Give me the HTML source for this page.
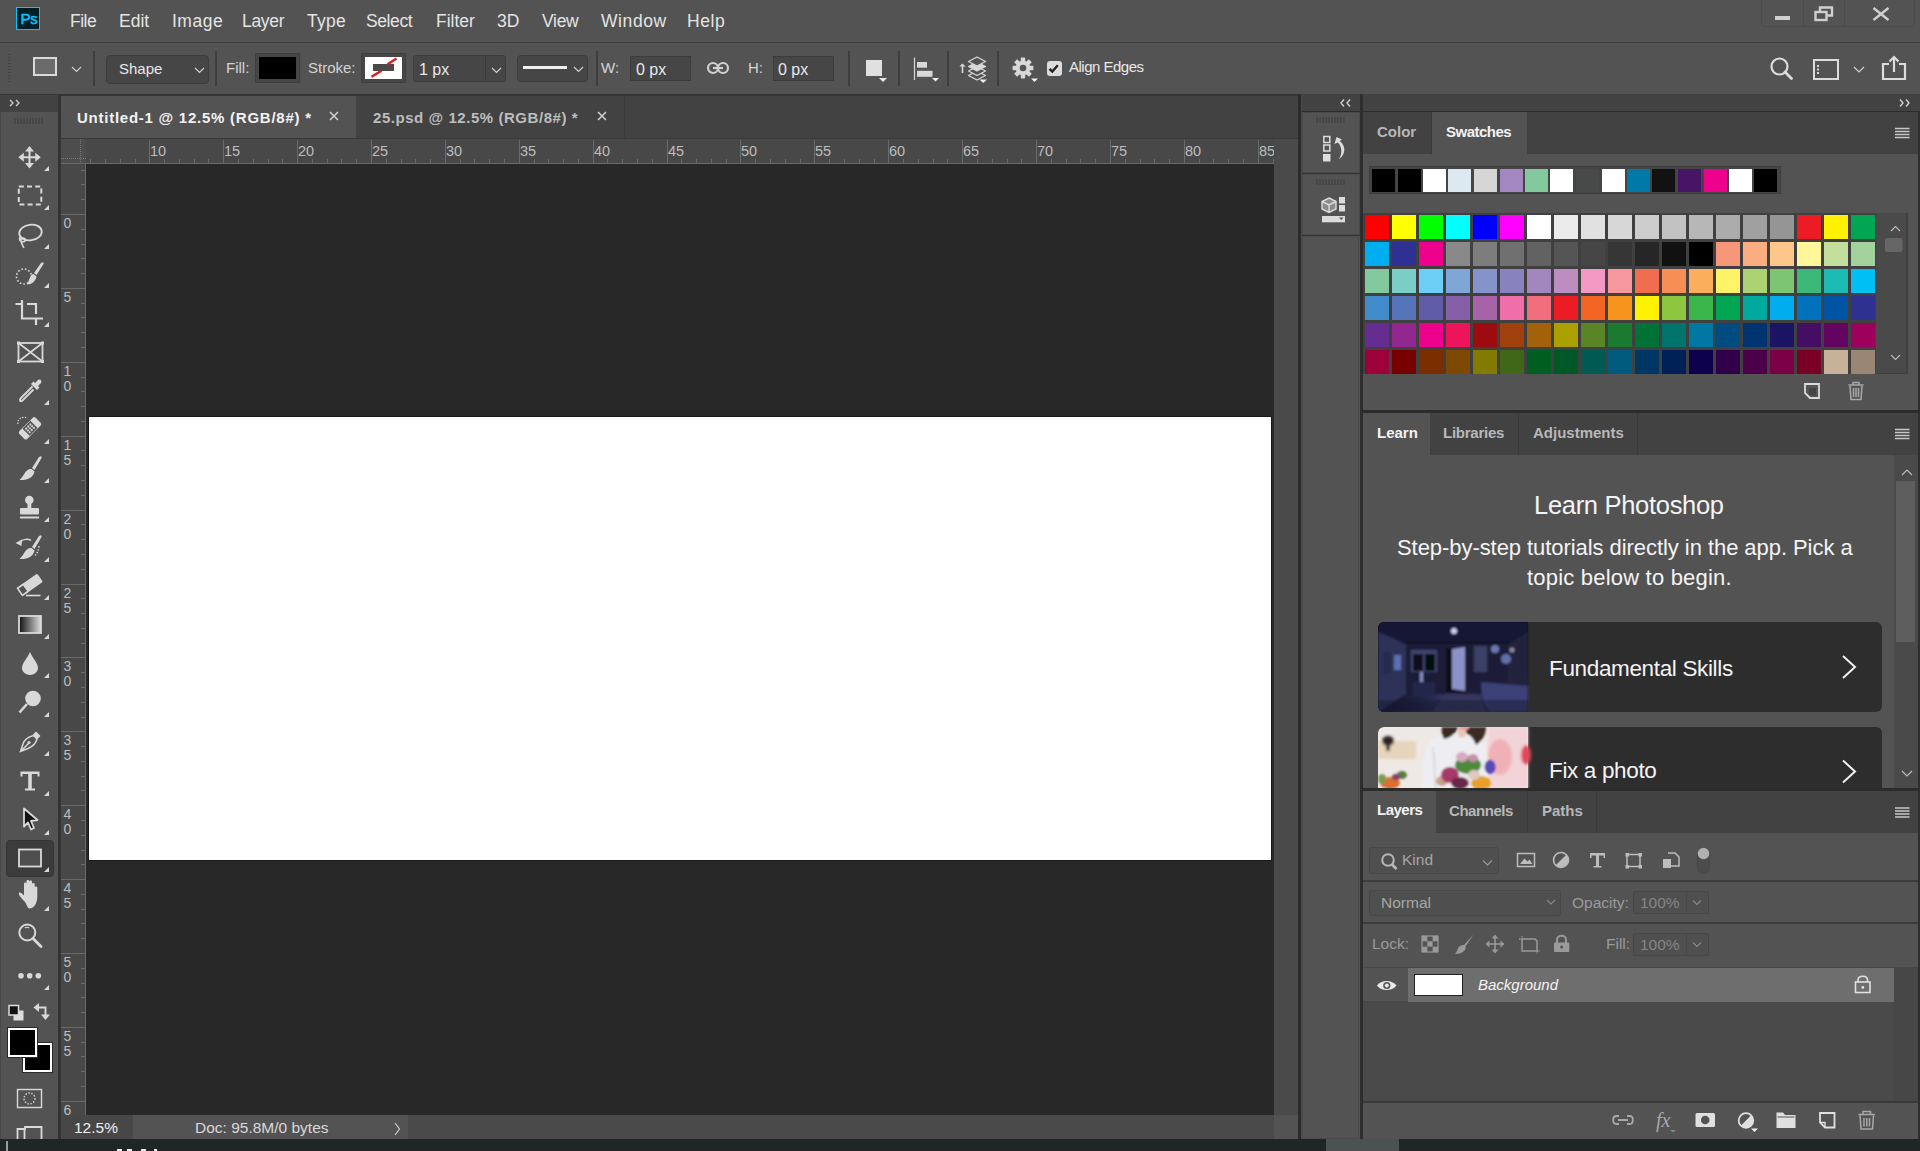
<!DOCTYPE html>
<html><head><meta charset="utf-8">
<style>
*{margin:0;padding:0;box-sizing:border-box}
html,body{width:1920px;height:1151px;overflow:hidden;background:#535353;font-family:"Liberation Sans",sans-serif;color:#e8e8e8}
.a{position:absolute}
.mi{position:absolute;top:10px;font-size:17.5px;color:#e4e4e4;white-space:nowrap;line-height:22px}
.sep{position:absolute;top:51px;width:2px;height:35px;background:#3e3e3e}
.lbl{position:absolute;font-size:15px;color:#d4d4d4;white-space:nowrap;line-height:18px}
.tabt{position:absolute;font-size:15px;font-weight:bold;white-space:nowrap;line-height:18px}
svg{position:absolute;overflow:visible}
.lt{position:absolute;color:#f4f4f4;white-space:nowrap;line-height:1.15}
.rn{position:absolute;font-size:14.5px;color:#bdbdbd;line-height:16px}
.rv{position:absolute;font-size:14px;color:#bdbdbd;line-height:14.5px;text-align:center;width:9px}
</style></head><body>
<!-- MENU BAR -->
<div class="a" style="left:0;top:0;width:1920px;height:42px;background:#535353"></div>
<div class="a" style="left:16px;top:7px;width:24px;height:23px;background:#001e26;border:1.6px solid #00c8ff"></div>
<div class="a" style="left:20.5px;top:8.5px;font-size:15px;color:#00c8ff;line-height:20px;-webkit-text-stroke:0.5px #00c8ff;letter-spacing:-0.3px">Ps</div>
<div class="mi" style="left:70px;letter-spacing:-0.5px">File</div>
<div class="mi" style="left:119px">Edit</div>
<div class="mi" style="left:172px;letter-spacing:0.5px">Image</div>
<div class="mi" style="left:242px;letter-spacing:-0.3px">Layer</div>
<div class="mi" style="left:307px;letter-spacing:0.3px">Type</div>
<div class="mi" style="left:366px;letter-spacing:-0.4px">Select</div>
<div class="mi" style="left:436px">Filter</div>
<div class="mi" style="left:497px">3D</div>
<div class="mi" style="left:542px;letter-spacing:-0.3px">View</div>
<div class="mi" style="left:601px;letter-spacing:0.6px">Window</div>
<div class="mi" style="left:687px;letter-spacing:0.6px">Help</div>

<!-- OPTIONS BAR -->
<div class="a" style="left:0;top:42px;width:1920px;height:1px;background:#3f3f3f"></div>
<div class="a" style="left:0;top:94px;width:1920px;height:2px;background:#363636"></div>


<!-- options content -->
<div class="a" style="left:8px;top:54px;width:3px;height:29px;background:repeating-linear-gradient(#464646 0 1.5px,transparent 1.5px 3px)"></div>
<div class="a" style="left:33px;top:57px;width:24px;height:19px;border:2px solid #d9d9d9;background:#6b6b6b"></div>
<svg style="left:71px;top:66px" width="11" height="7"><path d="M1 1 L5.5 5.5 L10 1" stroke="#cfcfcf" stroke-width="1.2" fill="none"/></svg>
<div class="sep" style="left:93px"></div>
<div class="a" style="left:106px;top:55px;width:103px;height:29px;background:#464646;border:1px solid #3c3c3c;border-radius:4px"></div>
<div class="lbl" style="left:119px;top:60px;color:#e8e8e8;font-size:15px">Shape</div>
<svg style="left:194px;top:67px" width="11" height="7"><path d="M1 1 L5.5 5.5 L10 1" stroke="#cfcfcf" stroke-width="1.2" fill="none"/></svg>
<div class="sep" style="left:215px"></div>
<div class="lbl" style="left:226px;top:59px">Fill:</div>
<div class="a" style="left:255px;top:53px;width:45px;height:30px;background:#464646;border:1px solid #3e3e3e"></div>
<div class="a" style="left:259px;top:57px;width:37px;height:22px;background:#000"></div>
<div class="lbl" style="left:308px;top:59px">Stroke:</div>
<div class="a" style="left:361px;top:53px;width:45px;height:30px;background:#464646;border:1px solid #3e3e3e"></div>
<div class="a" style="left:365px;top:57px;width:37px;height:22px;background:#fff"></div>
<div class="a" style="left:373px;top:64px;width:21px;height:7px;background:#4a4a4a"></div>
<svg style="left:365px;top:57px" width="37" height="22"><path d="M6.5 19.8 L16.5 13.8 M22.5 7.2 L31.5 1.5" stroke="#e01a1a" stroke-width="2.4"/></svg>
<div class="a" style="left:413px;top:55px;width:93px;height:27px;background:#464646;border:1px solid #3c3c3c;border-radius:3px"></div>
<div class="a" style="left:485px;top:56px;width:1px;height:25px;background:#3a3a3a"></div>
<div class="lbl" style="left:419px;top:60.5px;color:#e8e8e8;font-size:16px">1 px</div>
<svg style="left:491px;top:67px" width="11" height="7"><path d="M1 1 L5.5 5.5 L10 1" stroke="#cfcfcf" stroke-width="1.2" fill="none"/></svg>
<div class="a" style="left:517px;top:55px;width:71px;height:27px;background:#464646;border:1px solid #3c3c3c;border-radius:4px"></div>
<div class="a" style="left:523px;top:66px;width:44px;height:3px;background:#f0f0f0"></div>
<svg style="left:573px;top:66px" width="11" height="7"><path d="M1 1 L5.5 5.5 L10 1" stroke="#cfcfcf" stroke-width="1.2" fill="none"/></svg>
<div class="sep" style="left:596px"></div>
<div class="lbl" style="left:601px;top:59px">W:</div>
<div class="a" style="left:630px;top:56px;width:61px;height:25px;background:#464646;border:1px solid #3c3c3c"></div>
<div class="lbl" style="left:636px;top:60.5px;color:#e8e8e8;font-size:16px">0 px</div>
<svg style="left:707px;top:61px" width="22" height="14"><rect x="1" y="2" width="10" height="10" rx="5" stroke="#d0d0d0" stroke-width="2.2" fill="none"/><rect x="11" y="2" width="10" height="10" rx="5" stroke="#d0d0d0" stroke-width="2.2" fill="none"/><path d="M6 7 H16" stroke="#d0d0d0" stroke-width="2.2"/></svg>
<div class="lbl" style="left:748px;top:59px">H:</div>
<div class="a" style="left:773px;top:56px;width:61px;height:25px;background:#464646;border:1px solid #3c3c3c"></div>
<div class="lbl" style="left:778px;top:60.5px;color:#e8e8e8;font-size:16px">0 px</div>
<div class="sep" style="left:848px"></div>
<div class="a" style="left:866px;top:60px;width:16px;height:16px;background:#e0e0e0"></div>
<svg style="left:879px;top:78px" width="8" height="4"><path d="M0 0 H8 L4 4Z" fill="#e8e8e8"/></svg>
<div class="sep" style="left:898px"></div>
<svg style="left:913px;top:57px" width="25" height="24"><path d="M1.5 0.5 V23" stroke="#d8d8d8" stroke-width="1.2"/><rect x="4" y="5" width="10" height="5.7" fill="#d8d8d8"/><rect x="4" y="13.8" width="15.5" height="6" fill="#d8d8d8"/><path d="M19 21 H26 L22.5 24.5Z" fill="#f0f0f0"/></svg>
<div class="sep" style="left:947px"></div>
<svg style="left:958px;top:56px" width="30" height="26"><path d="M4.5 17 V9.5" stroke="#d8d8d8" stroke-width="1.6"/><path d="M1.3 10.5 L4.5 7.5 L7.7 10.5Z" fill="#d8d8d8"/><path d="M10.5 19.5 L19 15.0 L27.5 19.5 L19 24.0Z" stroke="#d8d8d8" stroke-width="1.3" fill="#535353" stroke-linejoin="round"/><path d="M10.5 15 L19 10.5 L27.5 15 L19 19.5Z" stroke="#d8d8d8" stroke-width="1.3" fill="#535353" stroke-linejoin="round"/><path d="M10.5 10.5 L19 6.0 L27.5 10.5 L19 15.0Z" stroke="#d8d8d8" stroke-width="1.3" fill="#d8d8d8" stroke-linejoin="round"/><path d="M10.5 5.5 L19 1.0 L27.5 5.5 L19 10.0Z" stroke="#d8d8d8" stroke-width="1.3" fill="#535353" stroke-linejoin="round"/><path d="M21.5 23.5 H29 L25.2 27Z" fill="#f0f0f0"/></svg>
<div class="sep" style="left:997px"></div>
<svg style="left:1012px;top:57px" width="26" height="26"><rect x="17.00" y="8.80" width="4.4" height="4.4" rx="0.8" fill="#d8d8d8" transform="rotate(0 19.20 11.00)"/><rect x="14.60" y="14.60" width="4.4" height="4.4" rx="0.8" fill="#d8d8d8" transform="rotate(45 16.80 16.80)"/><rect x="8.80" y="17.00" width="4.4" height="4.4" rx="0.8" fill="#d8d8d8" transform="rotate(90 11.00 19.20)"/><rect x="3.00" y="14.60" width="4.4" height="4.4" rx="0.8" fill="#d8d8d8" transform="rotate(135 5.20 16.80)"/><rect x="0.60" y="8.80" width="4.4" height="4.4" rx="0.8" fill="#d8d8d8" transform="rotate(180 2.80 11.00)"/><rect x="3.00" y="3.00" width="4.4" height="4.4" rx="0.8" fill="#d8d8d8" transform="rotate(225 5.20 5.20)"/><rect x="8.80" y="0.60" width="4.4" height="4.4" rx="0.8" fill="#d8d8d8" transform="rotate(270 11.00 2.80)"/><rect x="14.60" y="3.00" width="4.4" height="4.4" rx="0.8" fill="#d8d8d8" transform="rotate(315 16.80 5.20)"/><circle cx="11" cy="11" r="5.3" fill="none" stroke="#d8d8d8" stroke-width="4"/><path d="M19 21.5 H26 L22.5 25Z" fill="#f0f0f0"/></svg>
<div class="a" style="left:1046.5px;top:60.5px;width:15px;height:15px;background:#dcdcdc;border-radius:3px"></div>
<svg style="left:1046px;top:61px" width="15" height="15"><path d="M3.5 7.8 L6.3 10.6 L11.8 4.2" stroke="#222" stroke-width="2.4" fill="none"/></svg>
<div class="lbl" style="left:1069px;top:58px;color:#e8e8e8;font-size:15px;letter-spacing:-0.5px">Align Edges</div>
<svg style="left:1770px;top:57px" width="24" height="24"><circle cx="9.5" cy="9.5" r="8" stroke="#dcdcdc" stroke-width="2.2" fill="none"/><path d="M15 15 L21.5 21.5" stroke="#dcdcdc" stroke-width="2.8" stroke-linecap="round"/></svg>
<svg style="left:1813px;top:59px" width="26" height="21"><rect x="1" y="1" width="24" height="19" stroke="#dcdcdc" stroke-width="2" fill="none"/><path d="M5 6 V16" stroke="#dcdcdc" stroke-width="2" stroke-dasharray="2 1.5"/></svg>
<svg style="left:1853px;top:66px" width="12" height="7"><path d="M1 1 L6 6 L11 1" stroke="#cfcfcf" stroke-width="1.2" fill="none"/></svg>
<svg style="left:1881px;top:55px" width="26" height="25"><path d="M8 9 H2 V24 H24 V9 H18" stroke="#dcdcdc" stroke-width="2.2" fill="none"/><path d="M13 17 V2 M8.5 6.5 L13 2 L17.5 6.5" stroke="#dcdcdc" stroke-width="2.2" fill="none"/></svg>
<!-- window controls -->
<div class="a" style="left:1761px;top:-4px;width:154px;height:31px;border:1px solid #4b4b4b;border-radius:5px"></div>
<div class="a" style="left:1803px;top:0;width:1px;height:27px;background:#4b4b4b"></div>
<div class="a" style="left:1844px;top:0;width:1px;height:27px;background:#4b4b4b"></div>
<div class="a" style="left:1775px;top:16px;width:15px;height:4px;background:#cfcfcf"></div>
<svg style="left:1814px;top:6px" width="20" height="16"><rect x="1.5" y="6" width="11" height="8" stroke="#cfcfcf" stroke-width="2.4" fill="none"/><path d="M6 5.5 V1.5 H18 V9.5 H13" stroke="#cfcfcf" stroke-width="2.4" fill="none"/></svg>
<svg style="left:1872px;top:7px" width="18" height="14"><path d="M1.5 1 L16.5 13 M16.5 1 L1.5 13" stroke="#cfcfcf" stroke-width="2.4"/></svg>

<!-- TOOLBAR -->
<div class="a" style="left:0;top:96px;width:58px;height:1043px;background:#535353;border-left:1px solid #474747"></div>
<div class="a" style="left:0;top:95px;width:58px;height:17px;background:#424242"></div>
<div class="a" style="left:58px;top:95px;width:3px;height:1044px;background:#333"></div>


<svg style="left:0;top:0" width="60" height="1151">
<path d="M10 100 L13 103 L10 106 M16 100 L19 103 L16 106" stroke="#cfcfcf" stroke-width="1.3" fill="none"/>
<path d="M15 118 V124 M18 118 V124 M21 118 V124 M24 118 V124 M27 118 V124 M30 118 V124 M33 118 V124 M36 118 V124 M39 118 V124 M42 118 V124" stroke="#3f3f3f" stroke-width="1.2"/>
<!-- move -->
<path d="M29.5 150 V164 M22.5 157.3 H36.5" stroke="#d9d9d9" stroke-width="2"/>
<path d="M29.5 146 L25 151.5 H34Z M29.5 168.5 L25 163 H34Z M18.3 157.3 L23.8 152.8 V161.8Z M40.8 157.3 L35.3 152.8 V161.8Z" fill="#d9d9d9"/>
<path d="M49 166 V171 H44Z" fill="#d9d9d9"/>
<!-- marquee -->
<rect x="18.8" y="186.5" width="22.5" height="18" stroke="#d9d9d9" stroke-width="2" fill="none" stroke-dasharray="5 3.2"/>
<path d="M49 205 V210 H44Z" fill="#d9d9d9"/>
<!-- lasso -->
<ellipse cx="30.5" cy="232.5" rx="11.3" ry="7.8" stroke="#d9d9d9" stroke-width="1.8" fill="none" transform="rotate(-8 30.5 232.5)"/>
<path d="M21 236 C17 240 22 243 25 241 C27 239 23 237 21 239 C20 241 22 244 24 248" stroke="#d9d9d9" stroke-width="1.6" fill="none"/>
<path d="M49 244 V249 H44Z" fill="#d9d9d9"/>
<!-- quick select -->
<circle cx="24" cy="276.5" r="7.5" stroke="#d9d9d9" stroke-width="1.6" fill="none" stroke-dasharray="1.6 2"/>
<path d="M42.3 262.5 C43.3 262 44 263 43.5 264 L36.5 275 L34 273 L41 263Z" fill="#d9d9d9"/>
<path d="M33.5 274 L36.5 276.5 C35.5 281 32 284.5 27 284.5 C28.5 282 29 279.5 30 277.5 C31 275.5 32 274 33.5 274Z" fill="#d9d9d9"/>
<path d="M49 283 V288 H44Z" fill="#d9d9d9"/>
<!-- crop -->
<path d="M15.5 304 H22 V318.5 H36 V325 M22 300 V304 M36 318.5 H43 M27 304 H36 V314" stroke="#d9d9d9" stroke-width="2.2" fill="none"/>
<path d="M49 322 V327 H44Z" fill="#d9d9d9"/>
<!-- frame -->
<rect x="18.5" y="343" width="24" height="18.5" stroke="#d9d9d9" stroke-width="1.8" fill="none"/>
<path d="M18.5 343 L42.5 361.5 M42.5 343 L18.5 361.5" stroke="#d9d9d9" stroke-width="1.6"/>
<rect x="17" y="341.5" width="3" height="3" fill="#d9d9d9"/><rect x="41" y="341.5" width="3" height="3" fill="#d9d9d9"/><rect x="17" y="360" width="3" height="3" fill="#d9d9d9"/><rect x="41" y="360" width="3" height="3" fill="#d9d9d9"/>
<!-- eyedropper -->
<path d="M38.5 379.5 C41 379 42 381 41 383 L38 386 L39.5 387.5 L37 390 L31 384 L33.5 381.5 L35 383Z" fill="#d9d9d9"/>
<path d="M32.5 386.5 L21 398 C19 400 20 402 22 401 L33.5 389.5" stroke="#d9d9d9" stroke-width="1.8" fill="none"/>
<path d="M49 400 V405 H44Z" fill="#d9d9d9"/>
<!-- healing -->
<g transform="rotate(-45 30 429)"><rect x="19" y="423" width="23" height="11" rx="2" fill="#d9d9d9"/><rect x="25" y="423.5" width="11" height="10" fill="#535353"/>
<circle cx="27.5" cy="426" r="1.1" fill="#d9d9d9"/><circle cx="30.5" cy="426" r="1.1" fill="#d9d9d9"/><circle cx="33.5" cy="426" r="1.1" fill="#d9d9d9"/><circle cx="27.5" cy="428.5" r="1.1" fill="#d9d9d9"/><circle cx="30.5" cy="428.5" r="1.1" fill="#d9d9d9"/><circle cx="33.5" cy="428.5" r="1.1" fill="#d9d9d9"/><circle cx="27.5" cy="431" r="1.1" fill="#d9d9d9"/><circle cx="30.5" cy="431" r="1.1" fill="#d9d9d9"/><circle cx="33.5" cy="431" r="1.1" fill="#d9d9d9"/></g>
<path d="M18 424 C17 419 22 416 27 418" stroke="#d9d9d9" stroke-width="1.3" fill="none" stroke-dasharray="1.3 1.5"/>
<path d="M49 439 V444 H44Z" fill="#d9d9d9"/>
<!-- brush -->
<path d="M40.3 456.5 C41.3 456 42 457 41.5 458 L34.5 470 L32 468 L39 457Z" fill="#d9d9d9"/>
<path d="M31.5 469 L34.5 471.5 C33.5 477 28 480.5 19.5 480 C22.5 477.5 23.5 474.5 25.5 472 C27.5 469.5 29.5 468.5 31.5 469Z" fill="#d9d9d9"/>
<path d="M49 478 V483 H44Z" fill="#d9d9d9"/>
<!-- stamp -->
<circle cx="29.3" cy="500" r="4.3" fill="#d9d9d9"/><rect x="27.5" y="503" width="3.8" height="5" fill="#d9d9d9"/>
<rect x="20" y="508" width="19" height="6.5" rx="1" fill="#d9d9d9"/><rect x="20" y="516.5" width="19" height="2" fill="#d9d9d9"/>
<path d="M49 517 V522 H44Z" fill="#d9d9d9"/>
<!-- history brush -->
<path d="M40.3 535.5 C41.3 535 42 536 41.5 537 L34.5 549 L32 547 L39 536Z" fill="#d9d9d9"/>
<path d="M31.5 548 L34.5 550.5 C33.5 556 28 559.5 19.5 559 C22.5 556.5 23.5 553.5 25.5 551 C27.5 548.5 29.5 547.5 31.5 548Z" fill="#d9d9d9"/>
<path d="M15.5 543 L22 539.5 L21.5 546Z" fill="#d9d9d9"/><path d="M20 542 C23 539 28 538.5 31 540.5" stroke="#d9d9d9" stroke-width="1.5" fill="none"/>
<path d="M39 546 C38.5 551 37 554 34 556.5" stroke="#d9d9d9" stroke-width="1.4" fill="none" stroke-dasharray="1.4 1.6"/>
<path d="M49 557 V562 H44Z" fill="#d9d9d9"/>
<!-- eraser -->
<g transform="rotate(-35 31 584)"><rect x="21" y="579" width="21" height="10" rx="1.2" fill="#d9d9d9"/><rect x="17.5" y="579.8" width="7" height="8.5" stroke="#d9d9d9" stroke-width="1.6" fill="#535353"/></g>
<path d="M26 595.5 H40.5" stroke="#d9d9d9" stroke-width="1.6"/>
<path d="M49 595 V600 H44Z" fill="#d9d9d9"/>
<!-- gradient -->
<defs><linearGradient id="gr" x1="0" x2="1"><stop offset="0" stop-color="#111"/><stop offset="1" stop-color="#ddd"/></linearGradient></defs>
<rect x="19" y="616" width="22" height="17" fill="url(#gr)" stroke="#d9d9d9" stroke-width="1.8"/>
<path d="M49 634 V639 H44Z" fill="#d9d9d9"/>
<!-- blur -->
<path d="M30 652 C33 659 38 663 38 668 C38 672 34 675 30 675 C26 675 22 672 22 668 C22 663 27 659 30 652Z" fill="#d9d9d9"/>
<path d="M49 673 V678 H44Z" fill="#d9d9d9"/>
<!-- dodge -->
<circle cx="33" cy="698.5" r="7.8" fill="#d9d9d9"/><path d="M27 704 L19.5 712.5" stroke="#d9d9d9" stroke-width="2.6"/>
<path d="M49 712 V717 H44Z" fill="#d9d9d9"/>
<!-- pen -->
<path d="M36 731.5 L40.5 736 L37.5 739 L33 734.5Z" fill="#d9d9d9"/>
<path d="M33.5 735.5 L37 739 C36 743 34 746 28 748.5 L20.5 751.5 L23 744 C24.5 739 28 737 33.5 735.5Z M21 751 L28.5 743.5" stroke="#d9d9d9" stroke-width="1.5" fill="none"/>
<circle cx="29" cy="742.5" r="1.6" fill="#d9d9d9"/>
<path d="M49 751 V756 H44Z" fill="#d9d9d9"/>
<!-- type -->
<path d="M20.5 771.5 H39.5 V776.5 H37.5 V774 H31.8 V788.5 H35 V790.5 H25 V788.5 H28.2 V774 H22.5 V776.5 H20.5Z" fill="#d9d9d9"/>
<path d="M49 791 V796 H44Z" fill="#d9d9d9"/>
<!-- path select -->
<path d="M24 808.5 L37.5 820 L31 821 L34 828 L31 829.5 L28 822.5 L24 826.5Z" fill="#111" stroke="#d9d9d9" stroke-width="1.8" stroke-linejoin="round"/>
<path d="M49 830 V835 H44Z" fill="#d9d9d9"/>
</svg>
<div class="a" style="left:6px;top:840px;width:48px;height:37px;background:#3c3c3c;border:1px solid #353535;border-radius:4px"></div>
<svg style="left:0;top:0" width="60" height="1151">
<rect x="19" y="849.5" width="22" height="17" stroke="#d9d9d9" stroke-width="1.8" fill="#4e4e4e"/>
<path d="M49 867 V872 H44Z" fill="#d9d9d9"/>
<!-- hand -->
<path d="M25 902 C21 898 19 895 18.8 894 C18.5 892.5 20 892 21.5 893 L24 895.5 V883.5 C24 882 26.5 882 26.5 883.5 V891 V881 C26.5 879.5 29.3 879.5 29.3 881 V891 V881.5 C29.3 880 32 880 32 881.5 V891 V884 C32 882.5 34.7 882.5 34.7 884 V893 V887.5 C34.7 886 37.3 886 37.3 887.5 V897 C37.3 903 34 908.5 29.5 908.5 C27.5 908.5 26.5 904 25 902Z" fill="#d9d9d9"/>
<path d="M49 906 V911 H44Z" fill="#d9d9d9"/>
<!-- zoom -->
<circle cx="27.3" cy="932.5" r="8" stroke="#d9d9d9" stroke-width="2" fill="none"/><path d="M25 928 C26 927 28 927 29 928" stroke="#d9d9d9" stroke-width="1.2" fill="none"/>
<path d="M33 938.5 L41 946.5" stroke="#d9d9d9" stroke-width="2.8" stroke-linecap="round"/>
<!-- dots -->
<circle cx="21" cy="975.7" r="2.8" fill="#d9d9d9"/><circle cx="29.7" cy="975.7" r="2.8" fill="#d9d9d9"/><circle cx="38.3" cy="975.7" r="2.8" fill="#d9d9d9"/>
<path d="M49 985 V990 H44Z" fill="#d9d9d9"/>
<!-- default colors -->
<rect x="13.5" y="1010.5" width="10" height="10" fill="#ddd"/><rect x="9" y="1005.5" width="9.5" height="9.5" fill="#111" stroke="#ddd" stroke-width="1.5"/>
<path d="M37 1007.5 H45.5 V1016" stroke="#d9d9d9" stroke-width="1.9" fill="none"/>
<path d="M33.5 1007.5 L39 1003 V1012Z M45.5 1020 L41 1014.5 H50Z" fill="#d9d9d9"/>
</svg>
<div class="a" style="left:22.5px;top:1042.5px;width:29px;height:29px;background:#000;border:2px solid #fff;outline:1px solid #2a2a2a"></div>
<div class="a" style="left:8px;top:1028px;width:29px;height:29px;background:#000;border:2px solid #fff;outline:1px solid #2a2a2a"></div>
<svg style="left:0;top:0" width="60" height="1151">
<rect x="17.5" y="1089.5" width="24" height="18" stroke="#d9d9d9" stroke-width="1.4" fill="none"/>
<circle cx="29.5" cy="1098.5" r="5.5" stroke="#d9d9d9" stroke-width="1.3" fill="none" stroke-dasharray="1.5 1.5"/>
<path d="M17.5 1139 V1129 H25 V1127 H41.5 V1139 M24.5 1129 V1139" stroke="#d9d9d9" stroke-width="1.8" fill="none"/>
</svg>

<!-- DOC AREA -->
<div class="a" style="left:61px;top:96px;width:1237px;height:42px;background:#424242"></div>
<div class="a" style="left:61px;top:138px;width:1237px;height:1px;background:#393939"></div>
<div class="a" style="left:61px;top:139px;width:1213px;height:25px;background:#484848"></div>
<div class="a" style="left:61px;top:164px;width:25px;height:951px;background:#484848"></div>
<div class="a" style="left:86px;top:164px;width:1188px;height:951px;background:#282828"></div>
<div class="a" style="left:61px;top:1115px;width:1237px;height:24px;background:#4a4a4a"></div>
<div class="a" style="left:88px;top:416px;width:1184px;height:445px;background:#1a1a1a"></div>
<div class="a" style="left:89px;top:417px;width:1182px;height:443px;background:#ffffff"></div>

<div class="a" style="left:61px;top:96px;width:295px;height:42px;background:#535353"></div>
<div class="a" style="left:624px;top:96px;width:1px;height:42px;background:#393939"></div>
<div class="tabt" style="left:77px;top:109px;letter-spacing:0.75px;color:#f2f2f2">Untitled-1 @ 12.5% (RGB/8#) *</div>
<svg style="left:329px;top:111px" width="10" height="10"><path d="M1 1 L9 9 M9 1 L1 9" stroke="#d0d0d0" stroke-width="1.6"/></svg>
<div class="tabt" style="left:373px;top:109px;letter-spacing:0.55px;color:#bdbdbd">25.psd @ 12.5% (RGB/8#) *</div>
<svg style="left:597px;top:111px" width="10" height="10"><path d="M1 1 L9 9 M9 1 L1 9" stroke="#cfcfcf" stroke-width="1.6"/></svg>
<div class="a" style="left:61px;top:139px;width:25px;height:25px;background:#4d4d4d"></div>
<svg style="left:0;top:0" width="1300" height="1151"><path d="M61 163.5 H1274 M85.5 164 V1115" stroke="#6a6a6a" stroke-width="1"/><path d="M61 158.5 H86 M80.5 139 V164" stroke="#777" stroke-width="1" stroke-dasharray="1 1"/><path d="M90.5 159 V163 M105.5 159 V163 M120.5 159 V163 M135.5 159 V163 M149.5 140 V163 M164.5 159 V163 M179.5 159 V163 M194.5 159 V163 M208.5 159 V163 M223.5 140 V163 M238.5 159 V163 M253.5 159 V163 M268.5 159 V163 M282.5 159 V163 M297.5 140 V163 M312.5 159 V163 M327.5 159 V163 M341.5 159 V163 M356.5 159 V163 M371.5 140 V163 M386.5 159 V163 M401.5 159 V163 M415.5 159 V163 M430.5 159 V163 M445.5 140 V163 M460.5 159 V163 M474.5 159 V163 M489.5 159 V163 M504.5 159 V163 M519.5 140 V163 M534.5 159 V163 M548.5 159 V163 M563.5 159 V163 M578.5 159 V163 M593.5 140 V163 M607.5 159 V163 M622.5 159 V163 M637.5 159 V163 M652.5 159 V163 M667.5 140 V163 M681.5 159 V163 M696.5 159 V163 M711.5 159 V163 M726.5 159 V163 M740.5 140 V163 M755.5 159 V163 M770.5 159 V163 M785.5 159 V163 M800.5 159 V163 M814.5 140 V163 M829.5 159 V163 M844.5 159 V163 M859.5 159 V163 M874.5 159 V163 M888.5 140 V163 M903.5 159 V163 M918.5 159 V163 M933.5 159 V163 M947.5 159 V163 M962.5 140 V163 M977.5 159 V163 M992.5 159 V163 M1007.5 159 V163 M1021.5 159 V163 M1036.5 140 V163 M1051.5 159 V163 M1066.5 159 V163 M1080.5 159 V163 M1095.5 159 V163 M1110.5 140 V163 M1125.5 159 V163 M1140.5 159 V163 M1154.5 159 V163 M1169.5 159 V163 M1184.5 140 V163 M1199.5 159 V163 M1213.5 159 V163 M1228.5 159 V163 M1243.5 159 V163 M1258.5 140 V163 M1273.5 159 V163 M81 170.5 H85 M81 184.5 H85 M81 199.5 H85 M61 214.5 H85 M81 229.5 H85 M81 244.5 H85 M81 258.5 H85 M81 273.5 H85 M61 288.5 H85 M81 303.5 H85 M81 317.5 H85 M81 332.5 H85 M81 347.5 H85 M61 362.5 H85 M81 377.5 H85 M81 391.5 H85 M81 406.5 H85 M81 421.5 H85 M61 436.5 H85 M81 450.5 H85 M81 465.5 H85 M81 480.5 H85 M81 495.5 H85 M61 510.5 H85 M81 524.5 H85 M81 539.5 H85 M81 554.5 H85 M81 569.5 H85 M61 584.5 H85 M81 598.5 H85 M81 613.5 H85 M81 628.5 H85 M81 643.5 H85 M61 657.5 H85 M81 672.5 H85 M81 687.5 H85 M81 702.5 H85 M81 717.5 H85 M61 731.5 H85 M81 746.5 H85 M81 761.5 H85 M81 776.5 H85 M81 790.5 H85 M61 805.5 H85 M81 820.5 H85 M81 835.5 H85 M81 850.5 H85 M81 864.5 H85 M61 879.5 H85 M81 894.5 H85 M81 909.5 H85 M81 923.5 H85 M81 938.5 H85 M61 953.5 H85 M81 968.5 H85 M81 983.5 H85 M81 997.5 H85 M81 1012.5 H85 M61 1027.5 H85 M81 1042.5 H85 M81 1056.5 H85 M81 1071.5 H85 M81 1086.5 H85 M61 1101.5 H85" stroke="#6a6a6a" stroke-width="1"/></svg>
<div class="rn" style="left:150px;top:143px">10</div>
<div class="rn" style="left:224px;top:143px">15</div>
<div class="rn" style="left:298px;top:143px">20</div>
<div class="rn" style="left:372px;top:143px">25</div>
<div class="rn" style="left:446px;top:143px">30</div>
<div class="rn" style="left:520px;top:143px">35</div>
<div class="rn" style="left:594px;top:143px">40</div>
<div class="rn" style="left:668px;top:143px">45</div>
<div class="rn" style="left:741px;top:143px">50</div>
<div class="rn" style="left:815px;top:143px">55</div>
<div class="rn" style="left:889px;top:143px">60</div>
<div class="rn" style="left:963px;top:143px">65</div>
<div class="rn" style="left:1037px;top:143px">70</div>
<div class="rn" style="left:1111px;top:143px">75</div>
<div class="rn" style="left:1185px;top:143px">80</div>
<div class="rn" style="left:1259px;top:143px">85</div>
<div class="rv" style="left:63px;top:216px">0</div>
<div class="rv" style="left:63px;top:290px">5</div>
<div class="rv" style="left:63px;top:364px">1<br>0</div>
<div class="rv" style="left:63px;top:438px">1<br>5</div>
<div class="rv" style="left:63px;top:512px">2<br>0</div>
<div class="rv" style="left:63px;top:586px">2<br>5</div>
<div class="rv" style="left:63px;top:659px">3<br>0</div>
<div class="rv" style="left:63px;top:733px">3<br>5</div>
<div class="rv" style="left:63px;top:807px">4<br>0</div>
<div class="rv" style="left:63px;top:881px">4<br>5</div>
<div class="rv" style="left:63px;top:955px">5<br>0</div>
<div class="rv" style="left:63px;top:1029px">5<br>5</div>
<div class="rv" style="left:63px;top:1103px">6<br>0</div>
<div class="a" style="left:61px;top:1115px;width:72px;height:24px;background:#474747"></div>
<div class="a" style="left:133px;top:1115px;width:275px;height:24px;background:#535353"></div>
<div class="a" style="left:1274px;top:1115px;width:24px;height:24px;background:#535353"></div>
<div class="lbl" style="left:74px;top:1119px;color:#f0f0f0;font-size:15.5px">12.5%</div>
<div class="lbl" style="left:195px;top:1119px;color:#d8d8d8;font-size:15.5px">Doc: 95.8M/0 bytes</div>
<svg style="left:394px;top:1122px" width="7" height="14"><path d="M1 1 L5.5 7 L1 13" stroke="#cfcfcf" stroke-width="1.2" fill="none"/></svg>
<div class="a" style="left:1274px;top:139px;width:24px;height:976px;background:#4a4a4a"></div>
<!-- DIVIDERS & RIGHT -->
<div class="a" style="left:1298px;top:95px;width:4px;height:1044px;background:#2b2b2b"></div>
<div class="a" style="left:1360px;top:95px;width:3px;height:1044px;background:#2e2e2e"></div>

<div class="a" style="left:1301px;top:95px;width:59px;height:1044px;background:#535353;border-left:1px solid #4a4a4a"></div>
<div class="a" style="left:1302px;top:94px;width:58px;height:17px;background:#424242"></div>
<div class="a" style="left:1302px;top:111px;width:58px;height:1px;background:#2c2c2c"></div>
<div class="a" style="left:1302px;top:112px;width:58px;height:61px;border:1px solid #4a4a4a"></div>
<div class="a" style="left:1302px;top:173px;width:58px;height:1px;background:#353535"></div>
<div class="a" style="left:1302px;top:174px;width:58px;height:61px;border:1px solid #4a4a4a"></div>
<div class="a" style="left:1302px;top:235px;width:58px;height:1px;background:#353535"></div>
<div class="a" style="left:1302px;top:236px;width:57px;height:903px;border:1px solid #4a4a4a"></div>
<svg style="left:0;top:0" width="1920" height="1151">
<path d="M1344 99.5 L1341 103 L1344 106.5 M1350 99.5 L1347 103 L1350 106.5" stroke="#d0d0d0" stroke-width="1.4" fill="none"/>
<path d="M1317 117 V123 M1320 117 V123 M1323 117 V123 M1326 117 V123 M1329 117 V123 M1332 117 V123 M1335 117 V123 M1338 117 V123 M1341 117 V123 M1344 117 V123" stroke="#3f3f3f" stroke-width="1.1"/>
<path d="M1317 179 V185 M1320 179 V185 M1323 179 V185 M1326 179 V185 M1329 179 V185 M1332 179 V185 M1335 179 V185 M1338 179 V185 M1341 179 V185 M1344 179 V185" stroke="#3f3f3f" stroke-width="1.1"/>
<rect x="1323.8" y="136.5" width="6" height="6" stroke="#dcdcdc" stroke-width="1.5" fill="none"/>
<rect x="1323.8" y="145" width="6" height="6" stroke="#dcdcdc" stroke-width="1.5" fill="none"/>
<rect x="1323" y="154" width="7.5" height="7.5" fill="#dcdcdc"/>
<path d="M1334.5 144 L1336.5 137 L1342 139.5 L1339.8 141 C1346 146 1346 154 1339 159.5 C1342.5 153 1342 147 1338 142.5Z" fill="#dcdcdc"/>
<path d="M1329 198 L1336 201.5 V209 L1329 212.5 L1322 209 V201.5Z" fill="#8a8a8a" stroke="#dcdcdc" stroke-width="1.4"/>
<path d="M1322 201.5 L1329 205 L1336 201.5 M1329 205 V212.5" stroke="#dcdcdc" stroke-width="1.4" fill="none"/>
<rect x="1339" y="197" width="6" height="6.5" fill="#dcdcdc"/><rect x="1339" y="205" width="6" height="6.5" fill="#dcdcdc"/>
<rect x="1322" y="216" width="23" height="6.3" fill="#dcdcdc"/><path d="M1339 217.5 H1343.5 L1341.2 220Z" fill="#555"/>
</svg>
<div class="a" style="left:1363px;top:94px;width:557px;height:17px;background:#424242"></div>
<div class="a" style="left:1363px;top:111px;width:557px;height:1px;background:#2c2c2c"></div>
<div class="a" style="left:1918px;top:112px;width:2px;height:1027px;background:#2e2e2e"></div>
<div class="a" style="left:1363px;top:112px;width:555px;height:42px;background:#424242"></div>
<div class="a" style="left:1432px;top:112px;width:95px;height:42px;background:#535353"></div>
<div class="a" style="left:1363px;top:112px;width:69px;height:42px;border-right:1px solid #393939"></div>
<div class="tabt" style="left:1377px;top:123px;color:#b8b8b8">Color</div>
<div class="tabt" style="left:1446px;top:123px;color:#f2f2f2;letter-spacing:-0.5px">Swatches</div>
<div class="a" style="left:1363px;top:154px;width:555px;height:256px;background:#535353"></div>
<div class="a" style="left:1363px;top:410px;width:555px;height:3px;background:#2c2c2c"></div>
<div class="a" style="left:1369px;top:166px;width:412px;height:28px;background:#454545;border:1px solid #3f3f3f"></div>
<div class="a" style="left:1372px;top:169px;width:23px;height:23px;background:#000"></div>
<div class="a" style="left:1398px;top:169px;width:23px;height:23px;background:#000"></div>
<div class="a" style="left:1423px;top:169px;width:23px;height:23px;background:#fff"></div>
<div class="a" style="left:1448px;top:169px;width:23px;height:23px;background:#dce9f1"></div>
<div class="a" style="left:1474px;top:169px;width:23px;height:23px;background:#d5d5d5"></div>
<div class="a" style="left:1500px;top:169px;width:23px;height:23px;background:#a287c0"></div>
<div class="a" style="left:1525px;top:169px;width:23px;height:23px;background:#84c99d"></div>
<div class="a" style="left:1550px;top:169px;width:23px;height:23px;background:#fff"></div>
<div class="a" style="left:1576px;top:169px;width:23px;height:23px;background:#474a48"></div>
<div class="a" style="left:1602px;top:169px;width:23px;height:23px;background:#fff"></div>
<div class="a" style="left:1627px;top:169px;width:23px;height:23px;background:#0079a8"></div>
<div class="a" style="left:1652px;top:169px;width:23px;height:23px;background:#121212"></div>
<div class="a" style="left:1678px;top:169px;width:23px;height:23px;background:#481466"></div>
<div class="a" style="left:1704px;top:169px;width:23px;height:23px;background:#ec008c"></div>
<div class="a" style="left:1729px;top:169px;width:23px;height:23px;background:#fff"></div>
<div class="a" style="left:1754px;top:169px;width:23px;height:23px;background:#000"></div>
<div class="a" style="left:1363px;top:213px;width:545px;height:161px;background:#404040"></div>
<div class="a" style="left:1876px;top:213px;width:30px;height:160px;background:#4a4a4a"></div>
<div class="a" style="left:1365px;top:215px;width:24px;height:24px;background:#ff0000"></div>
<div class="a" style="left:1392px;top:215px;width:24px;height:24px;background:#ffff00"></div>
<div class="a" style="left:1419px;top:215px;width:24px;height:24px;background:#00ff00"></div>
<div class="a" style="left:1446px;top:215px;width:24px;height:24px;background:#00ffff"></div>
<div class="a" style="left:1473px;top:215px;width:24px;height:24px;background:#0000ff"></div>
<div class="a" style="left:1500px;top:215px;width:24px;height:24px;background:#ff00ff"></div>
<div class="a" style="left:1527px;top:215px;width:24px;height:24px;background:#ffffff"></div>
<div class="a" style="left:1554px;top:215px;width:24px;height:24px;background:#ebebeb"></div>
<div class="a" style="left:1581px;top:215px;width:24px;height:24px;background:#e1e1e1"></div>
<div class="a" style="left:1608px;top:215px;width:24px;height:24px;background:#d7d7d7"></div>
<div class="a" style="left:1635px;top:215px;width:24px;height:24px;background:#cccccc"></div>
<div class="a" style="left:1662px;top:215px;width:24px;height:24px;background:#c2c2c2"></div>
<div class="a" style="left:1689px;top:215px;width:24px;height:24px;background:#b7b7b7"></div>
<div class="a" style="left:1716px;top:215px;width:24px;height:24px;background:#acacac"></div>
<div class="a" style="left:1743px;top:215px;width:24px;height:24px;background:#a0a0a0"></div>
<div class="a" style="left:1770px;top:215px;width:24px;height:24px;background:#959595"></div>
<div class="a" style="left:1797px;top:215px;width:24px;height:24px;background:#ed1c24"></div>
<div class="a" style="left:1824px;top:215px;width:24px;height:24px;background:#fff200"></div>
<div class="a" style="left:1851px;top:215px;width:24px;height:24px;background:#00a651"></div>
<div class="a" style="left:1365px;top:242px;width:24px;height:24px;background:#00aeef"></div>
<div class="a" style="left:1392px;top:242px;width:24px;height:24px;background:#2e3192"></div>
<div class="a" style="left:1419px;top:242px;width:24px;height:24px;background:#ec008c"></div>
<div class="a" style="left:1446px;top:242px;width:24px;height:24px;background:#898989"></div>
<div class="a" style="left:1473px;top:242px;width:24px;height:24px;background:#7d7d7d"></div>
<div class="a" style="left:1500px;top:242px;width:24px;height:24px;background:#707070"></div>
<div class="a" style="left:1527px;top:242px;width:24px;height:24px;background:#626262"></div>
<div class="a" style="left:1554px;top:242px;width:24px;height:24px;background:#555555"></div>
<div class="a" style="left:1581px;top:242px;width:24px;height:24px;background:#464646"></div>
<div class="a" style="left:1608px;top:242px;width:24px;height:24px;background:#363636"></div>
<div class="a" style="left:1635px;top:242px;width:24px;height:24px;background:#262626"></div>
<div class="a" style="left:1662px;top:242px;width:24px;height:24px;background:#111111"></div>
<div class="a" style="left:1689px;top:242px;width:24px;height:24px;background:#000000"></div>
<div class="a" style="left:1716px;top:242px;width:24px;height:24px;background:#f7977a"></div>
<div class="a" style="left:1743px;top:242px;width:24px;height:24px;background:#f9ad81"></div>
<div class="a" style="left:1770px;top:242px;width:24px;height:24px;background:#fdc68a"></div>
<div class="a" style="left:1797px;top:242px;width:24px;height:24px;background:#fff79a"></div>
<div class="a" style="left:1824px;top:242px;width:24px;height:24px;background:#c4df9b"></div>
<div class="a" style="left:1851px;top:242px;width:24px;height:24px;background:#a3d39c"></div>
<div class="a" style="left:1365px;top:269px;width:24px;height:24px;background:#82ca9d"></div>
<div class="a" style="left:1392px;top:269px;width:24px;height:24px;background:#7bcdc8"></div>
<div class="a" style="left:1419px;top:269px;width:24px;height:24px;background:#6ecff6"></div>
<div class="a" style="left:1446px;top:269px;width:24px;height:24px;background:#7ea7d8"></div>
<div class="a" style="left:1473px;top:269px;width:24px;height:24px;background:#8493ca"></div>
<div class="a" style="left:1500px;top:269px;width:24px;height:24px;background:#8882be"></div>
<div class="a" style="left:1527px;top:269px;width:24px;height:24px;background:#a187be"></div>
<div class="a" style="left:1554px;top:269px;width:24px;height:24px;background:#bc8dbf"></div>
<div class="a" style="left:1581px;top:269px;width:24px;height:24px;background:#f49ac2"></div>
<div class="a" style="left:1608px;top:269px;width:24px;height:24px;background:#f6989d"></div>
<div class="a" style="left:1635px;top:269px;width:24px;height:24px;background:#f26c4f"></div>
<div class="a" style="left:1662px;top:269px;width:24px;height:24px;background:#f68e56"></div>
<div class="a" style="left:1689px;top:269px;width:24px;height:24px;background:#fbaf5d"></div>
<div class="a" style="left:1716px;top:269px;width:24px;height:24px;background:#fff467"></div>
<div class="a" style="left:1743px;top:269px;width:24px;height:24px;background:#acd372"></div>
<div class="a" style="left:1770px;top:269px;width:24px;height:24px;background:#7dc473"></div>
<div class="a" style="left:1797px;top:269px;width:24px;height:24px;background:#3cb878"></div>
<div class="a" style="left:1824px;top:269px;width:24px;height:24px;background:#1cbbb4"></div>
<div class="a" style="left:1851px;top:269px;width:24px;height:24px;background:#00bff3"></div>
<div class="a" style="left:1365px;top:296px;width:24px;height:24px;background:#438ccb"></div>
<div class="a" style="left:1392px;top:296px;width:24px;height:24px;background:#5574b9"></div>
<div class="a" style="left:1419px;top:296px;width:24px;height:24px;background:#605ca8"></div>
<div class="a" style="left:1446px;top:296px;width:24px;height:24px;background:#855fa8"></div>
<div class="a" style="left:1473px;top:296px;width:24px;height:24px;background:#a763a8"></div>
<div class="a" style="left:1500px;top:296px;width:24px;height:24px;background:#f06ea9"></div>
<div class="a" style="left:1527px;top:296px;width:24px;height:24px;background:#f26d7d"></div>
<div class="a" style="left:1554px;top:296px;width:24px;height:24px;background:#ed1c24"></div>
<div class="a" style="left:1581px;top:296px;width:24px;height:24px;background:#f26522"></div>
<div class="a" style="left:1608px;top:296px;width:24px;height:24px;background:#f7941d"></div>
<div class="a" style="left:1635px;top:296px;width:24px;height:24px;background:#fff200"></div>
<div class="a" style="left:1662px;top:296px;width:24px;height:24px;background:#8dc63f"></div>
<div class="a" style="left:1689px;top:296px;width:24px;height:24px;background:#39b54a"></div>
<div class="a" style="left:1716px;top:296px;width:24px;height:24px;background:#00a651"></div>
<div class="a" style="left:1743px;top:296px;width:24px;height:24px;background:#00a99d"></div>
<div class="a" style="left:1770px;top:296px;width:24px;height:24px;background:#00aeef"></div>
<div class="a" style="left:1797px;top:296px;width:24px;height:24px;background:#0072bc"></div>
<div class="a" style="left:1824px;top:296px;width:24px;height:24px;background:#0054a6"></div>
<div class="a" style="left:1851px;top:296px;width:24px;height:24px;background:#2e3192"></div>
<div class="a" style="left:1365px;top:323px;width:24px;height:24px;background:#662d91"></div>
<div class="a" style="left:1392px;top:323px;width:24px;height:24px;background:#92278f"></div>
<div class="a" style="left:1419px;top:323px;width:24px;height:24px;background:#ec008c"></div>
<div class="a" style="left:1446px;top:323px;width:24px;height:24px;background:#ed145b"></div>
<div class="a" style="left:1473px;top:323px;width:24px;height:24px;background:#9e0b0f"></div>
<div class="a" style="left:1500px;top:323px;width:24px;height:24px;background:#a0410d"></div>
<div class="a" style="left:1527px;top:323px;width:24px;height:24px;background:#a36209"></div>
<div class="a" style="left:1554px;top:323px;width:24px;height:24px;background:#aba000"></div>
<div class="a" style="left:1581px;top:323px;width:24px;height:24px;background:#598527"></div>
<div class="a" style="left:1608px;top:323px;width:24px;height:24px;background:#1a7b30"></div>
<div class="a" style="left:1635px;top:323px;width:24px;height:24px;background:#007236"></div>
<div class="a" style="left:1662px;top:323px;width:24px;height:24px;background:#00746b"></div>
<div class="a" style="left:1689px;top:323px;width:24px;height:24px;background:#0076a3"></div>
<div class="a" style="left:1716px;top:323px;width:24px;height:24px;background:#004b80"></div>
<div class="a" style="left:1743px;top:323px;width:24px;height:24px;background:#003471"></div>
<div class="a" style="left:1770px;top:323px;width:24px;height:24px;background:#1b1464"></div>
<div class="a" style="left:1797px;top:323px;width:24px;height:24px;background:#440e62"></div>
<div class="a" style="left:1824px;top:323px;width:24px;height:24px;background:#630460"></div>
<div class="a" style="left:1851px;top:323px;width:24px;height:24px;background:#9e005d"></div>
<div class="a" style="left:1365px;top:350px;width:24px;height:24px;background:#9e0039"></div>
<div class="a" style="left:1392px;top:350px;width:24px;height:24px;background:#790000"></div>
<div class="a" style="left:1419px;top:350px;width:24px;height:24px;background:#7b2e00"></div>
<div class="a" style="left:1446px;top:350px;width:24px;height:24px;background:#7d4900"></div>
<div class="a" style="left:1473px;top:350px;width:24px;height:24px;background:#827b00"></div>
<div class="a" style="left:1500px;top:350px;width:24px;height:24px;background:#406618"></div>
<div class="a" style="left:1527px;top:350px;width:24px;height:24px;background:#005e20"></div>
<div class="a" style="left:1554px;top:350px;width:24px;height:24px;background:#005826"></div>
<div class="a" style="left:1581px;top:350px;width:24px;height:24px;background:#005952"></div>
<div class="a" style="left:1608px;top:350px;width:24px;height:24px;background:#005b7f"></div>
<div class="a" style="left:1635px;top:350px;width:24px;height:24px;background:#003663"></div>
<div class="a" style="left:1662px;top:350px;width:24px;height:24px;background:#002157"></div>
<div class="a" style="left:1689px;top:350px;width:24px;height:24px;background:#0d004c"></div>
<div class="a" style="left:1716px;top:350px;width:24px;height:24px;background:#32004b"></div>
<div class="a" style="left:1743px;top:350px;width:24px;height:24px;background:#4b0049"></div>
<div class="a" style="left:1770px;top:350px;width:24px;height:24px;background:#7b0046"></div>
<div class="a" style="left:1797px;top:350px;width:24px;height:24px;background:#7a0026"></div>
<div class="a" style="left:1824px;top:350px;width:24px;height:24px;background:#c7b299"></div>
<div class="a" style="left:1851px;top:350px;width:24px;height:24px;background:#998675"></div>
<svg style="left:0;top:0" width="1920" height="1151">
<path d="M1891 231 L1895.5 226.5 L1900 231" stroke="#bdbdbd" stroke-width="1.1" fill="none"/>
<path d="M1891 355 L1895.5 359.5 L1900 355" stroke="#bdbdbd" stroke-width="1.1" fill="none"/>
<rect x="1885" y="238" width="17.5" height="14" rx="2" fill="#666"/>
<path d="M1895 128.5 H1909.5 M1895 131.5 H1909.5 M1895 134.5 H1909.5 M1895 137.5 H1909.5" stroke="#c8c8c8" stroke-width="1.5"/>
<path d="M1900 99.5 L1903 103 L1900 106.5 M1906 99.5 L1909 103 L1906 106.5" stroke="#d0d0d0" stroke-width="1.4" fill="none"/>
<path d="M1805 384 H1819 V398 H1810 L1805 393Z" stroke="#dcdcdc" stroke-width="1.8" fill="#555"/>
<rect x="1809" y="388" width="7" height="7" fill="#444"/>
<path d="M1848.5 385 H1863.5 M1853 385 V382.5 H1859 V385 M1850 386 L1851 399.5 H1861 L1862 386 M1853.5 388 V397 M1856 388 V397 M1858.5 388 V397" stroke="#a8a8a8" stroke-width="1.5" fill="none"/>
</svg>
<div class="a" style="left:1363px;top:413px;width:555px;height:42px;background:#424242"></div>
<div class="a" style="left:1363px;top:413px;width:67px;height:42px;background:#535353"></div>
<div class="a" style="left:1518px;top:413px;width:1px;height:42px;background:#393939"></div>
<div class="a" style="left:1637px;top:413px;width:1px;height:42px;background:#393939"></div>
<div class="tabt" style="left:1377px;top:424px;color:#f2f2f2">Learn</div>
<div class="tabt" style="left:1443px;top:424px;color:#b8b8b8;letter-spacing:-0.25px">Libraries</div>
<div class="tabt" style="left:1533px;top:424px;color:#b8b8b8">Adjustments</div>
<div class="a" style="left:1363px;top:455px;width:555px;height:333px;background:#535353"></div>
<div class="a" style="left:1894px;top:455px;width:24px;height:333px;background:#4a4a4a"></div>
<div class="a" style="left:1896px;top:481px;width:19px;height:161px;background:#5e5e5e"></div>
<div class="a" style="left:1363px;top:788px;width:555px;height:3px;background:#2c2c2c"></div>
<div class="lt" style="left:1534px;top:491px;font-size:25.5px;letter-spacing:-0.3px">Learn Photoshop</div>
<div class="lt" style="left:1397px;top:535px;font-size:22px;letter-spacing:-0.06px">Step-by-step tutorials directly in the app. Pick a</div>
<div class="lt" style="left:1527px;top:565px;font-size:22px;letter-spacing:0.2px">topic below to begin.</div>
<div class="a" style="left:1378px;top:622px;width:504px;height:90px;background:#2d2d2d;border-radius:6px;overflow:hidden"><svg style="left:0;top:0" width="150" height="90" viewBox="0 0 150 90">
<defs><filter id="bl1" x="-10%" y="-10%" width="120%" height="120%"><feGaussianBlur stdDeviation="1.3"/></filter>
<radialGradient id="rg1" cx="0.55" cy="0.85" r="0.6"><stop offset="0" stop-color="#3a4070"/><stop offset="0.5" stop-color="#1e2240"/><stop offset="1" stop-color="#101224"/></radialGradient></defs>
<rect width="150" height="90" fill="url(#rg1)"/>
<g filter="url(#bl1)">
<rect x="0" y="0" width="150" height="20" fill="#151936"/>
<path d="M0 10 L28 22 V72 L0 90Z" fill="#2e3358"/>
<path d="M150 10 L130 22 V75 L150 90Z" fill="#20243e"/>
<rect x="28" y="22" width="102" height="50" fill="#1c1f38"/>
<rect x="5" y="30" width="8" height="22" fill="#252a50"/><rect x="16" y="33" width="7" height="15" fill="#5a70b0"/>
<rect x="33" y="28" width="26" height="22" fill="#3e4470"/><rect x="35" y="32" width="10" height="17" fill="#0c0e1c"/><rect x="47" y="32" width="10" height="17" fill="#06070f"/>
<rect x="68" y="26" width="20" height="45" fill="#0a0c16"/>
<path d="M74 27 L87 25 V69 L74 67Z" fill="#8a92c8"/>
<rect x="96" y="24" width="13" height="26" fill="#3a3f66"/>
<circle cx="117" cy="27" r="4" fill="#6a78b0"/><circle cx="128" cy="37" r="5" fill="#6070a8"/><circle cx="134" cy="28" r="2.5" fill="#9088a0"/>
<rect x="35" y="60" width="22" height="14" fill="#24284a"/><rect x="42" y="50" width="3" height="10" fill="#8090c0"/>
<path d="M103 60 L150 64 V90 L112 90 Q103 80 103 60Z" fill="#3a4076"/>
<path d="M68 71 L100 72 L108 90 H55Z" fill="#34365c"/>
<rect x="0" y="78" width="150" height="12" fill="#1a1c32" opacity="0.5"/>
<circle cx="76" cy="9" r="3" fill="#c8d0f0"/>
</g></svg></div>
<div class="lt" style="left:1549px;top:656px;font-size:22.5px;letter-spacing:-0.35px">Fundamental Skills</div>
<div class="a" style="left:1378px;top:727px;width:504px;height:61px;background:#2d2d2d;border-radius:6px 6px 0 0;overflow:hidden"><svg style="left:0;top:0" width="150" height="61" viewBox="0 0 150 61">
<defs><filter id="bl2" x="-10%" y="-10%" width="120%" height="120%"><feGaussianBlur stdDeviation="1.6"/></filter><filter id="bl3" x="-5%" y="-5%" width="110%" height="110%"><feGaussianBlur stdDeviation="1"/></filter></defs>
<rect width="150" height="61" fill="#efe9e6"/>
<g filter="url(#bl2)">
<rect x="0" y="14" width="38" height="18" fill="#e6d4bc"/>
<ellipse cx="10" cy="14" rx="6" ry="5" fill="#2a2222"/><rect x="8" y="15" width="4" height="9" fill="#2a2222"/>
<rect x="110" y="0" width="40" height="61" fill="#f2d4d8"/>
<ellipse cx="122" cy="30" rx="12" ry="18" fill="#f0b0b8"/>
<ellipse cx="148" cy="28" rx="5" ry="10" fill="#e04858"/>
</g>
<g filter="url(#bl3)">
<path d="M45 61 C44 32 47 14 60 9 L78 7 L100 10 C108 14 110 32 109 61Z" fill="#eeeef2"/>
<path d="M55 20 C57 35 56 50 58 61" stroke="#d8d8de" stroke-width="2" fill="none"/>
<path d="M64 0 H80 C78 6 74 10 66 12 C64 8 63 4 64 0Z" fill="#3a2a22"/>
<path d="M86 0 H108 C108 8 104 14 98 18 C96 12 92 8 88 6Z" fill="#3e2c22"/>
<path d="M80 0 H88 V8 C86 12 82 12 80 8Z" fill="#e8c8b8"/>
<ellipse cx="86" cy="1" rx="5" ry="2" fill="#e89a9a"/>
<ellipse cx="64" cy="54" rx="6" ry="5" fill="#c8a088"/>
<ellipse cx="72" cy="48" rx="9" ry="8" fill="#a8386a"/>
<ellipse cx="90" cy="38" rx="13" ry="9" fill="#4e8a3e"/>
<ellipse cx="84" cy="30" rx="6" ry="5" fill="#d8a8c0"/>
<ellipse cx="95" cy="31" rx="5" ry="4" fill="#c890a8"/>
<ellipse cx="112" cy="40" rx="5.5" ry="7" fill="#5848b8"/>
<ellipse cx="103" cy="56" rx="10" ry="7" fill="#e8a028"/>
<ellipse cx="82" cy="56" rx="9" ry="6" fill="#6a2848"/>
<ellipse cx="96" cy="48" rx="6" ry="5" fill="#e0c8c0"/>
<ellipse cx="12" cy="56" rx="10" ry="6" fill="#d87030"/>
<ellipse cx="24" cy="48" rx="5" ry="4" fill="#5a7a40"/>
<ellipse cx="18" cy="50" rx="4" ry="3" fill="#8a3a6a"/>
<ellipse cx="4" cy="52" rx="4" ry="5" fill="#7a9a50"/>
</g></svg></div>
<div class="lt" style="left:1549px;top:758px;font-size:22.5px;letter-spacing:-0.35px">Fix a photo</div>
<svg style="left:0;top:0" width="1920" height="1151">
<path d="M1843 656 L1855 667 L1843 678" stroke="#f0f0f0" stroke-width="2" fill="none"/>
<path d="M1843 760.5 L1855 771.5 L1843 782.5" stroke="#f0f0f0" stroke-width="2" fill="none"/>
<path d="M1902 475 L1907 470 L1912 475" stroke="#bdbdbd" stroke-width="1.1" fill="none"/>
<path d="M1902 771 L1907 776 L1912 771" stroke="#bdbdbd" stroke-width="1.1" fill="none"/>
<path d="M1895 429.5 H1909.5 M1895 432.5 H1909.5 M1895 435.5 H1909.5 M1895 438.5 H1909.5" stroke="#c8c8c8" stroke-width="1.5"/>
</svg>
<div class="a" style="left:1363px;top:791px;width:555px;height:42px;background:#424242"></div>
<div class="a" style="left:1363px;top:791px;width:73px;height:42px;background:#535353"></div>
<div class="a" style="left:1527px;top:791px;width:1px;height:42px;background:#393939"></div>
<div class="a" style="left:1596px;top:791px;width:1px;height:42px;background:#393939"></div>
<div class="tabt" style="left:1377px;top:801px;color:#f2f2f2;letter-spacing:-0.5px">Layers</div>
<div class="tabt" style="left:1449px;top:802px;color:#b8b8b8;letter-spacing:-0.45px">Channels</div>
<div class="tabt" style="left:1542px;top:802px;color:#b8b8b8">Paths</div>
<div class="a" style="left:1363px;top:833px;width:555px;height:306px;background:#535353"></div>
<svg style="left:0;top:0" width="1920" height="1151"><path d="M1895 808 H1909.5 M1895 811 H1909.5 M1895 814 H1909.5 M1895 817 H1909.5" stroke="#c8c8c8" stroke-width="1.5"/></svg>
<div class="a" style="left:1363px;top:880px;width:555px;height:2px;background:#3c3c3c"></div>
<div class="a" style="left:1363px;top:922px;width:555px;height:2px;background:#3c3c3c"></div>
<div class="a" style="left:1369px;top:847px;width:130px;height:27px;border:1px solid #474747;border-radius:3px;background:#4f4f4f"></div>
<div class="lbl" style="left:1402px;top:851px;color:#a6a6a6;font-size:15.5px">Kind</div>
<div class="a" style="left:1369px;top:890px;width:192px;height:26px;border:1px solid #474747;border-radius:3px;background:#4f4f4f"></div>
<div class="lbl" style="left:1381px;top:894px;color:#a6a6a6;font-size:15.5px">Normal</div>
<div class="lbl" style="left:1572px;top:894px;color:#9a9a9a;font-size:15.5px">Opacity:</div>
<div class="a" style="left:1633px;top:891px;width:76px;height:23px;border:1px solid #474747;border-radius:2px;background:#4f4f4f"></div>
<div class="a" style="left:1686px;top:891px;width:1px;height:23px;background:#474747"></div>
<div class="lbl" style="left:1640px;top:894px;color:#858585;font-size:15.5px">100%</div>
<div class="lbl" style="left:1372px;top:935px;color:#9a9a9a;font-size:15.5px">Lock:</div>
<div class="lbl" style="left:1606px;top:935px;color:#9a9a9a;font-size:15.5px">Fill:</div>
<div class="a" style="left:1633px;top:933px;width:76px;height:23px;border:1px solid #474747;border-radius:2px;background:#4f4f4f"></div>
<div class="a" style="left:1686px;top:933px;width:1px;height:23px;background:#474747"></div>
<div class="lbl" style="left:1640px;top:936px;color:#858585;font-size:15.5px">100%</div>
<div class="a" style="left:1363px;top:967px;width:530px;height:134px;background:#4a4a4a"></div>
<div class="a" style="left:1893px;top:967px;width:25px;height:134px;background:#474747"></div>
<div class="a" style="left:1363px;top:968px;width:45px;height:34px;background:#535353;border-bottom:1px solid #474747"></div>
<div class="a" style="left:1408px;top:968px;width:486px;height:34px;background:#6e6e6e"></div>
<div class="a" style="left:1414px;top:974px;width:49px;height:22px;background:#fff;border:1px solid #222"></div>
<div class="lbl" style="left:1478px;top:976px;color:#f4f4f4;font-size:15px;font-style:italic">Background</div>
<div class="a" style="left:1363px;top:1101px;width:555px;height:2px;background:#3a3a3a"></div>
<svg style="left:0;top:0" width="1920" height="1151">
<circle cx="1388" cy="860" r="5.8" stroke="#b8b8b8" stroke-width="2" fill="none"/><path d="M1392 864.5 L1396.5 869" stroke="#b8b8b8" stroke-width="2.6"/>
<path d="M1483 860.5 L1487.5 865 L1492 860.5" stroke="#9a9a9a" stroke-width="1.1" fill="none"/>
<path d="M1547 900 L1551 904 L1555 900" stroke="#8a8a8a" stroke-width="1.1" fill="none"/>
<path d="M1693 900.5 L1697 904.5 L1701 900.5" stroke="#8a8a8a" stroke-width="1.1" fill="none"/>
<path d="M1693 942.5 L1697 946.5 L1701 942.5" stroke="#8a8a8a" stroke-width="1.1" fill="none"/>
<rect x="1517.5" y="853.5" width="17" height="13" stroke="#bdbdbd" stroke-width="1.5" fill="none"/><path d="M1520 864 L1524.5 858.5 L1527.5 861.5 L1529.5 859.5 L1532.5 864Z" fill="#bdbdbd"/>
<circle cx="1561" cy="860" r="7.5" stroke="#bdbdbd" stroke-width="1.6" fill="none"/><path d="M1566.3 854.7 A7.5 7.5 0 0 1 1555.7 865.3Z" fill="#bdbdbd"/>
<path d="M1590 853 H1605 V858 H1603.5 V855.5 H1599 V866 H1601.5 V867.5 H1593.5 V866 H1596 V855.5 H1591.5 V858 H1590Z" fill="#bdbdbd"/>
<rect x="1627" y="854.5" width="13" height="12" stroke="#bdbdbd" stroke-width="1.5" fill="none"/><rect x="1625.5" y="853" width="3.5" height="3.5" fill="#bdbdbd"/><rect x="1638.5" y="853" width="3.5" height="3.5" fill="#bdbdbd"/><rect x="1625.5" y="865" width="3.5" height="3.5" fill="#bdbdbd"/><rect x="1638.5" y="865" width="3.5" height="3.5" fill="#bdbdbd"/>
<path d="M1668 853 H1675 L1679 857 V866 H1670 V862" stroke="#bdbdbd" stroke-width="1.5" fill="none"/><rect x="1663" y="859" width="8" height="9" fill="#bdbdbd"/>
<rect x="1697.5" y="848" width="12" height="25" rx="6" stroke="#484848" stroke-width="1.2" fill="#4c4c4c"/><circle cx="1703.5" cy="853.5" r="5.8" fill="#b0b0b0"/>
<rect x="1422" y="936" width="16" height="16" stroke="#9a9a9a" stroke-width="1.2" fill="none"/>
<rect x="1422" y="936" width="5.3" height="5.3" fill="#9a9a9a"/><rect x="1432.7" y="936" width="5.3" height="5.3" fill="#9a9a9a"/><rect x="1427.3" y="941.3" width="5.3" height="5.3" fill="#9a9a9a"/><rect x="1422" y="946.7" width="5.3" height="5.3" fill="#9a9a9a"/><rect x="1432.7" y="946.7" width="5.3" height="5.3" fill="#9a9a9a"/>
<path d="M1473.5 934.5 L1464 945 C1462 944.5 1459 946 1458 948.5 C1457 951 1456 953 1455 954 C1459 954 1462 953 1464 951 C1466 949 1466 947.5 1465.5 946.5Z" fill="#9a9a9a"/>
<path d="M1495 937 V951 M1488 944 H1502" stroke="#9a9a9a" stroke-width="1.6"/><path d="M1495 934.5 L1491.5 938.5 H1498.5Z M1495 953.5 L1491.5 949.5 H1498.5Z M1485.5 944 L1489.5 940.5 V947.5Z M1504.5 944 L1500.5 940.5 V947.5Z" fill="#9a9a9a"/>
<path d="M1522 939 H1535 L1537 941 V951 H1522Z" stroke="#9a9a9a" stroke-width="1.5" fill="none"/><path d="M1519 939 H1522 M1537 951 H1540 M1522 936 V939 M1537 951 V954" stroke="#9a9a9a" stroke-width="1.3" stroke-dasharray="1.5 1"/>
<path d="M1557 943 V939.5 C1557 934.5 1566 934.5 1566 939.5 V943" stroke="#9a9a9a" stroke-width="2" fill="none"/><rect x="1554" y="942.5" width="15.3" height="9.5" rx="1" fill="#9a9a9a"/><circle cx="1561.6" cy="947" r="1.5" fill="#535353"/>
<path d="M1377 985.5 C1381 979.5 1392 979.5 1396.5 985.5 C1392 991.5 1381 991.5 1377 985.5Z" fill="#e8e8e8"/><circle cx="1386.8" cy="985.5" r="3.6" fill="#535353"/><circle cx="1386.8" cy="985.5" r="2" fill="#e8e8e8"/>
<path d="M1858 982 V980 C1858 975 1867.5 975 1867.5 980 V982" stroke="#e0e0e0" stroke-width="1.6" fill="none"/><rect x="1855.5" y="982" width="14.5" height="10.5" stroke="#e0e0e0" stroke-width="1.6" fill="none"/><circle cx="1862.8" cy="987.5" r="1.4" fill="#e0e0e0"/>
<g stroke="#a8a8a8" fill="none" stroke-width="1.8">
<path d="M1619 1116 H1616.5 C1612 1116 1612 1124 1616.5 1124 H1619 M1627 1116 H1629.5 C1634 1116 1634 1124 1629.5 1124 H1627 M1618 1120 H1628"/>
</g>
<text x="1656" y="1127" font-family="Liberation Serif" font-style="italic" font-size="20" fill="#a8a8a8">fx</text>
<path d="M1670 1130 H1676 L1673 1132.5Z" fill="#888"/>
<rect x="1695.5" y="1113" width="19.5" height="14" rx="1.5" fill="#e0e0e0"/><circle cx="1705.2" cy="1120" r="4.3" fill="#535353"/>
<circle cx="1746" cy="1120.5" r="7.3" stroke="#e0e0e0" stroke-width="1.7" fill="none"/><path d="M1751.2 1115.3 A7.3 7.3 0 0 1 1740.8 1125.7Z" fill="#e0e0e0"/><path d="M1751 1128.5 H1758 L1754.5 1132Z" fill="#f0f0f0"/>
<path d="M1776.5 1112.5 H1783 L1785 1115 H1795.5 V1128 H1776.5Z" fill="#e0e0e0"/><path d="M1777.5 1117 H1794.5" stroke="#535353" stroke-width="1"/>
<path d="M1820 1113 H1834.5 V1127.5 H1825 L1820 1122.5Z" stroke="#e0e0e0" stroke-width="1.8" fill="none"/><path d="M1820 1122.5 H1825 V1127.5" stroke="#e0e0e0" stroke-width="1.4" fill="none"/>
<path d="M1858.5 1114.5 H1875 M1863 1114.5 V1111.5 H1870.5 V1114.5 M1860 1115.5 L1861 1129 H1872.5 L1873.5 1115.5 M1864 1118 V1126.5 M1866.8 1118 V1126.5 M1869.5 1118 V1126.5" stroke="#a8a8a8" stroke-width="1.5" fill="none"/>
</svg>
<!-- TASKBAR -->
<div class="a" style="left:0;top:1139px;width:1920px;height:12px;background:#1e2726"></div>
<div class="a" style="left:6px;top:1141px;width:2px;height:10px;background:#9a9a9a"></div>
<div class="a" style="left:1326px;top:1139px;width:73px;height:12px;background:#4a5252"></div>
<div class="a" style="left:117px;top:1149px;width:5px;height:2px;background:#eee"></div><div class="a" style="left:127px;top:1149px;width:5px;height:2px;background:#eee"></div><div class="a" style="left:141px;top:1149px;width:5px;height:2px;background:#eee"></div><div class="a" style="left:154px;top:1149px;width:3px;height:2px;background:#eee"></div>
</body></html>
